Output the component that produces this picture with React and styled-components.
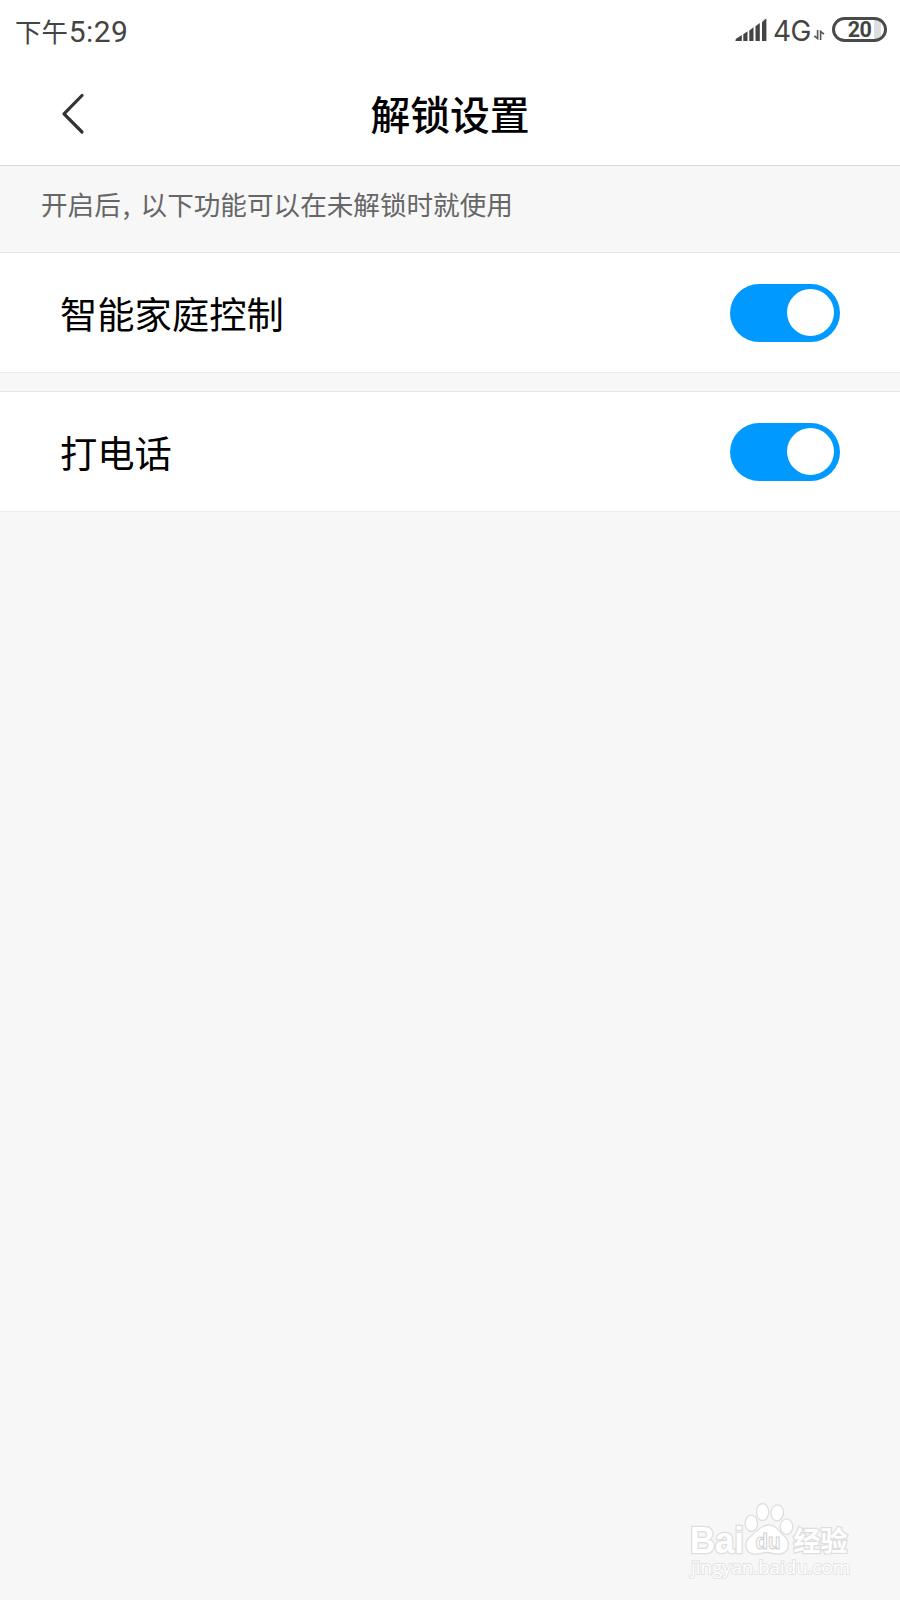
import React, { useState } from 'react'
import styled, { createGlobalStyle } from 'styled-components'

const GlobalStyle = createGlobalStyle`
  * {
    box-sizing: border-box;
  }
  body {
    margin: 0;
    background: #f7f7f7;
    font-family: "Noto Sans CJK SC", sans-serif;
  }
`

const SignalIcon = () => (
  <svg width="34" height="26" viewBox="0 0 34 26" fill="#444">
    <path d="M0.5 24 Q0 22.5 1.5 21.5 L6.8 18 V24 Z" />
    <path d="M8.3 17.3 L12.5 14.3 V24 H8.3 Z" />
    <path d="M14.3 13.5 L18.5 10.3 V24 H14.3 Z" />
    <path d="M20.5 9.3 L24.8 6 V24 H20.5 Z" />
    <path d="M27 5.5 Q27 4.6 31.4 1.6 V24 H27 Z" />
  </svg>
)

const DataIcon = () => (
  <svg width="12" height="12" viewBox="0 0 12 12" fill="none" stroke="#555" strokeWidth="1.6">
    <path d="M4.6 1 V9.5 L1.2 6.8" />
    <path d="M7.6 11 V2.5 L11 5.2" />
  </svg>
)

const BackIcon = () => (
  <svg width="24" height="42" viewBox="0 0 24 42" fill="none" stroke="#333" strokeWidth="3.2" strokeLinecap="round" strokeLinejoin="round">
    <path d="M21 2.5 L3 20.8 L21 39" />
  </svg>
)

const WatermarkLogo = () => (
  <svg width="170" height="90" viewBox="0 0 170 90" fill="#fff" stroke="#dedede" strokeWidth="1.3">
    <g fontFamily="Liberation Sans, sans-serif" fontWeight="bold" paintOrder="stroke" strokeWidth="2.6">
      <text x="3" y="52.5" fontSize="36" textLength="54" lengthAdjust="spacingAndGlyphs">Bai</text>
      <text x="106.5" y="51" fontSize="27" fontFamily="Noto Sans CJK SC, sans-serif">经验</text>
    </g>
    <path d="M81 25 C88 24 91 30 96 35 C104 41 103 53 93 54 C86 54.5 84 52.5 81 52.5 C76 52.5 71 54.5 66 54 C57 52.5 57 41 64 36 C70 31 73 26 81 25 Z" />
    <ellipse cx="64.3" cy="23.3" rx="6.2" ry="8.2" />
    <ellipse cx="75.6" cy="12" rx="6.1" ry="8.5" />
    <ellipse cx="90.2" cy="12.8" rx="6.3" ry="8" transform="rotate(8 90 13)" />
    <ellipse cx="99.5" cy="26.6" rx="6.3" ry="7.8" />
    <text x="68.5" y="49" fontSize="22" fontFamily="Liberation Sans, sans-serif" fontWeight="bold" textLength="25" lengthAdjust="spacingAndGlyphs" strokeWidth="1.1" stroke="#d2d2d2">du</text>
    <text x="4" y="74" fontSize="19" fontFamily="Open Sans, sans-serif" textLength="159" lengthAdjust="spacingAndGlyphs" paintOrder="stroke" strokeWidth="1.8" stroke="#e2e2e2">jingyan.baidu.com</text>
  </svg>
)

const App = () => {
  const [items, setItems] = useState([
    { label: '智能家庭控制', on: true },
    { label: '打电话', on: true },
  ])

  const toggle = (index) => {
    setItems(items.map((item, i) => (i === index ? { ...item, on: !item.on } : item)))
  }

  return (
    <Page>
      <GlobalStyle />
      <StatusBar>
        <Clock>下午<span>5:29</span></Clock>
        <StatusIcons>
          <SignalIcon />
          <Network>4G</Network>
          <DataIcon />
          <Battery>
            <span>20</span>
          </Battery>
        </StatusIcons>
      </StatusBar>
      <Header>
        <BackButton aria-label="返回">
          <BackIcon />
        </BackButton>
        <Title>解锁设置</Title>
      </Header>
      <Note>开启后<Comma>,</Comma>以下功能可以在未解锁时就使用</Note>
      <List>
        {items.map(({ label, on }, index) => (
          <Row key={label}>
            <Label>{label}</Label>
            <Toggle role="switch" aria-checked={on} $on={on} onClick={() => toggle(index)}>
              <Knob />
            </Toggle>
          </Row>
        ))}
      </List>
      <Watermark>
        <WatermarkLogo />
      </Watermark>
    </Page>
  )
}

const Page = styled.div`
  position: relative;
  width: 900px;
  height: 1600px;
  overflow: hidden;
  background: #f7f7f7;
`

const StatusBar = styled.div`
  display: flex;
  justify-content: space-between;
  height: 62px;
  padding: 0 13px 0 15px;
  background: #fff;
  color: #444;
`

const Clock = styled.div`
  font-size: 26.4px;
  line-height: 61px;
  white-space: nowrap;
  span {
    margin-left: 1px;
    font-family: Roboto, sans-serif;
    font-size: 30px;
    letter-spacing: 0.4px;
  }
`

const StatusIcons = styled.div`
  display: flex;
  align-items: flex-start;
  padding-top: 17px;
  svg {
    flex: none;
  }
  svg:nth-of-type(2) {
    margin: 12px 7px 0 2px;
  }
`

const Network = styled.span`
  width: 38px;
  margin-left: 4px;
  font-family: Inter, sans-serif;
  font-size: 28px;
  line-height: 28px;
  letter-spacing: -0.6px;
`

const Battery = styled.div`
  display: flex;
  justify-content: center;
  align-items: center;
  width: 55px;
  height: 25px;
  border: 3px solid #4a4a4a;
  border-radius: 13px;
  background: linear-gradient(to right, #fff 39px, #dedede 39px, #dedede 46px, #fff 46px);
  font-family: Roboto, sans-serif;
  font-size: 21.5px;
  font-weight: 700;
  line-height: 19px;
  letter-spacing: -0.6px;
`

const Header = styled.header`
  display: grid;
  grid-template-columns: 110px 1fr 110px;
  align-items: center;
  height: 104px;
  border-bottom: 1px solid #d9d9d9;
  background: #fff;
`

const BackButton = styled.button`
  display: flex;
  padding: 0 0 0 61px;
  border: 0;
  background: none;
`

const Title = styled.h1`
  margin: 0 0 2px;
  font-size: 39.8px;
  font-weight: 500;
  line-height: 60px;
  text-align: center;
  color: #000;
`

const Note = styled.div`
  height: 86px;
  padding: 18px 41px 0;
  font-size: 26.6px;
  line-height: 40px;
  color: #666;
`

const Comma = styled.span`
  display: inline-block;
  width: 19.8px;
  padding-left: 2px;
`

const List = styled.div`
  display: flex;
  flex-direction: column;
  gap: 18px;
`

const Row = styled.div`
  display: flex;
  justify-content: space-between;
  align-items: center;
  height: 121px;
  padding: 0 60px;
  border-top: 1px solid #e8e8e8;
  border-bottom: 1px solid #ebebeb;
  background: #fff;
`

const Label = styled.span`
  font-size: 37.3px;
  line-height: 56px;
  color: #000;
`

const Toggle = styled.button`
  display: flex;
  justify-content: ${({ $on }) => ($on ? 'flex-end' : 'flex-start')};
  align-items: center;
  width: 110px;
  height: 58px;
  padding: 0 6px;
  border: 0;
  border-radius: 29px;
  background: ${({ $on }) => ($on ? '#0099ff' : '#ccc')};
`

const Knob = styled.span`
  width: 47px;
  height: 47px;
  border-radius: 50%;
  background: #fff;
`

const Watermark = styled.div`
  position: absolute;
  right: 43px;
  bottom: 10px;
  svg {
    display: block;
  }
`

export default App
